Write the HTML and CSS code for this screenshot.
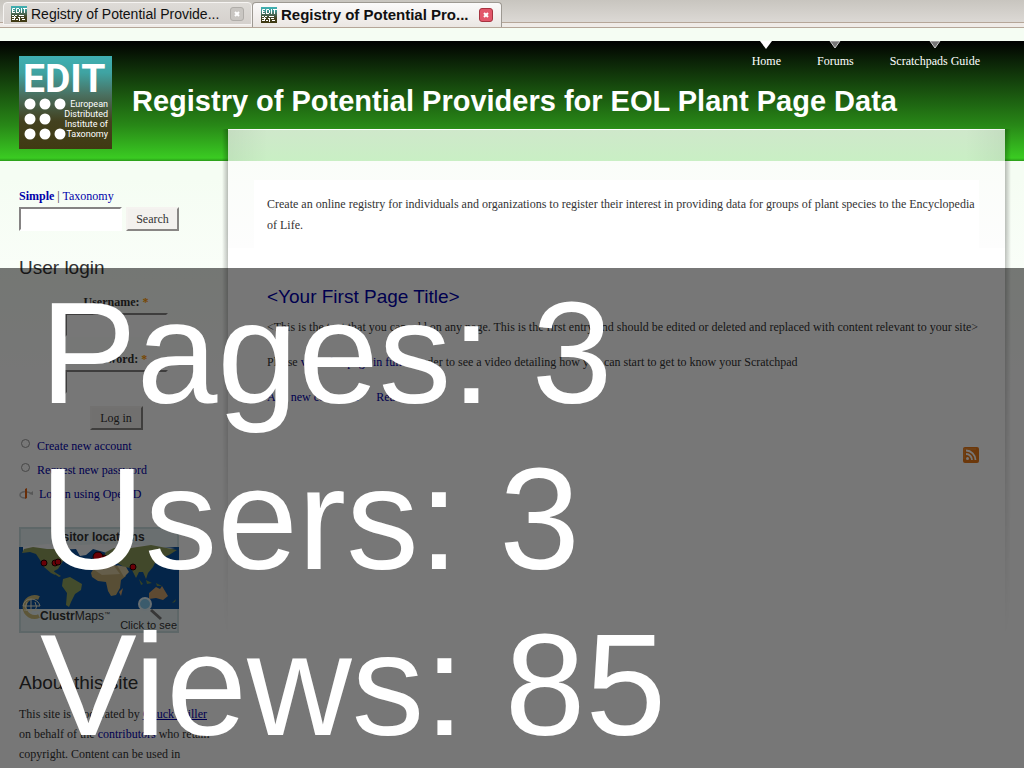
FILE: index.html
```
<!DOCTYPE html>
<html lang="en">
<head>
<meta charset="utf-8">
<title>Registry of Potential Providers for EOL Plant Page Data</title>
<link rel="stylesheet" href="styles.css">
</head>
<body>
<svg class="defs" width="0" height="0" aria-hidden="true">
  <defs>
    <linearGradient id="editGrad" x1="0" y1="0" x2="0" y2="1">
      <stop offset="0" stop-color="#3fb0b2"/><stop offset=".18" stop-color="#3fa3a2"/><stop offset=".42" stop-color="#4a7060"/><stop offset=".7" stop-color="#43411f"/><stop offset="1" stop-color="#403a12"/>
    </linearGradient>
    <symbol id="favicon" viewBox="0 0 16 16">
      <path fill="url(#editGrad)" d="M0 0h16v16H0z"/>
      <path fill="none" stroke="#fff" d="M4 2.500H1.500V7M1 4.500h2.500M1.500 6.500H4M5.500 7V2.500H8M8.500 3v3M5 6.500h3M10.500 2v5M12 2.500h4M13.500 3v4M1 9.500h2M4 9.500h2M8 9.500h5M1 11.500h4M7 11.500h2M10 11.500h3M3.500 10v4M1 13.500h2M5 13.500h2M8.500 12v3M11 13.500h3"/>
    </symbol>
  </defs>
</svg>
<nav class="tabs" aria-label="Open tabs">
  <div class="tab">
    <svg class="favicon"><use href="#favicon"/></svg>
    <span class="tab-title">Registry of Potential Provide...</span>
    <button class="close" aria-label="Close tab"><svg viewBox="0 0 12 12"><path d="M4 4l4 4M8 4l-4 4"/></svg></button>
  </div>
  <div class="tab tab-active">
    <svg class="favicon"><use href="#favicon"/></svg>
    <span class="tab-title">Registry of Potential Pro...</span>
    <button class="close close-active" aria-label="Close tab"><svg viewBox="0 0 12 12"><path d="M4 4l4 4M8 4l-4 4"/></svg></button>
  </div>
</nav>
<div class="page">
  <header class="header">
    <svg class="logo" viewBox="0 0 93 93" role="img" aria-label="EDIT">
      <path fill="url(#editGrad)" d="M0 0h93v93H0z"/>
      <text class="logo-name" x="4" y="36">EDIT</text>
      <g fill="#fff"><circle cx="11" cy="48" r="5.500"/><circle cx="26" cy="48" r="5.500"/><circle cx="41" cy="48" r="5.500"/><circle cx="11" cy="63" r="5.500"/><circle cx="26" cy="63" r="5.500"/><circle cx="11" cy="78" r="5.500"/><circle cx="26" cy="78" r="5.500"/><circle cx="41" cy="78" r="5.500"/></g>
      <g class="logo-sub"><text x="89" y="51">European</text><text x="89" y="61">Distributed</text><text x="89" y="71">Institute of</text><text x="89" y="81">Taxonomy</text></g>
    </svg>
    <div class="header-main">
      <nav class="menu">
        <a class="current" href="#"><svg viewBox="0 0 12 8"><path d="M0 0h12L6 8z"/></svg>Home</a>
        <a href="#"><svg viewBox="0 0 12 8"><path d="M1 0h10L6 7z"/></svg>Forums</a>
        <a href="#"><svg viewBox="0 0 12 8"><path d="M1 0h10L6 7z"/></svg>Scratchpads Guide</a>
      </nav>
      <h1>Registry of Potential Providers for EOL Plant Page Data</h1>
    </div>
  </header>
  <div class="columns">
    <aside class="sidebar">
      <form class="search">
        <div><a href="#"><b>Simple</b></a> | <a href="#">Taxonomy</a></div>
        <div class="search-row"><input type="text" aria-label="Search terms"><button type="button">Search</button></div>
      </form>
      <section class="login">
        <h2>User login</h2>
        <form>
          <label for="user">Username: <span>*</span></label>
          <input id="user" type="text">
          <label for="pass">Password: <span>*</span></label>
          <input id="pass" type="password">
          <button type="button">Log in</button>
        </form>
        <ul>
          <li><a href="#">Create new account</a></li>
          <li><a href="#">Request new password</a></li>
          <li class="openid"><svg viewBox="0 0 14 12"><path d="M6 3.500C2 4 1 5.500 1 7s2 3 5 3M8 4c2 0 3 .5 4 1.500" fill="none" stroke="#bbb" stroke-width="1.500"/><path d="M14 3v4l-4-1z" fill="#bbb"/><path d="M6 1l2-1v10l-2 1z" fill="#e06010"/></svg><a href="#">Log in using OpenID</a></li>
        </ul>
      </section>
      <svg class="map" viewBox="0 0 160 106" role="img" aria-label="Visitor locations">
        <path fill="#e4eef0" d="M0 0h160v106H0z"/>
        <path fill="#0a4f9c" d="M0 20h160v62H0z"/>
        <path fill="#f2f4f6" d="M4 20l24-3 34 1 20-1 36 1 38 3-18 3-38-2-12 4-14-4-7 6-6 1-4-7-20 1-33 1z"/>
        <g fill="#8c9a5a"><path d="M5 22l9-2 14 2 13 0 12 3-3 6-6 3-5 8-4 2 1 4-4-2-7-6-4-7-4-6-6-2-8 1zM32 42l5 4 5 3-2 1-6-4z"/><path d="M83 33l4-8 8-4 5 1 12-1 20-3 26 5-8 5-5 2-2-3-5 5-4 8-5 6-2 6-3-7-4 0-3 6-5-10-7-1-7-4-8 0z"/></g>
        <path fill="#bda873" d="M72 46l5-8 10-2 12 3 8 10-5 4-1 8-4 7-5 1-3-5-2-9-8-1-6-4z"/>
        <path fill="#d8c9a0" d="M74 42l8-5 13 2 6 8-18 1zM98 38l9 2 3 5-5 5z"/>
        <path fill="#91a35e" d="M44 52l7-2 12 7-1 6-6 4-4 8-2 5-3-2 1-12-5-7z"/>
        <path fill="#c99e6c" d="M130 66l7-6 4 2 2-3 6 10-5 4-7-2-7 1zM100 65l4-4-2 8z"/>
        <path fill="#6f8b4e" d="M120 52l4 5-2 1zM127 53l6 3-5 1zM137 56l6 3-5 0zM153 76l4-4-1 3z"/>
        <g fill="#e00010" stroke="#200" stroke-width="1"><circle cx="25" cy="36" r="3"/><circle cx="36" cy="36" r="3"/><circle cx="39" cy="35" r="3"/><circle cx="85" cy="31" r="3"/><circle cx="79" cy="30" r="5"/><circle cx="114" cy="40" r="3"/></g>
        <path fill="none" stroke="#c8b878" stroke-width="4" d="M20 71a10 10 0 1 0 0 18"/>
        <path fill="none" stroke="#f0ecd0" d="M12 72a8 8 0 0 0-8 7h17a9 9 0 0 0-9-7v14M5 83h16M8 75q-3 5 0 9M16 75q3 5 0 9"/>
        <path stroke="#777" stroke-width="3" d="M132 83l10 9"/><circle cx="126" cy="77" r="6" fill="#7fc4e8" stroke="#dcebf2" stroke-width="2"/>
        <path fill="none" stroke="#c9dcde" stroke-width="2" d="M1 20V1h158v19M1 82v23h158V82"/>
        <text class="map-title" x="79" y="14" text-anchor="middle">Visitor locations</text>
        <text class="map-brand" x="21" y="93"><tspan font-weight="bold">Clustr</tspan>Maps<tspan font-size="6" dy="-4">™</tspan></text>
        <text class="map-note" x="158" y="102" text-anchor="end">Click to see</text>
      </svg>
      <section class="about">
        <h2>About this site</h2>
        <p>This site is moderated by <a class="under" href="#">Chuck Miller</a> on behalf of the <a href="#">contributors</a> who retain copyright. Content can be used in</p>
      </section>
    </aside>
    <main class="panel">
      <div class="content">
        <p class="mission">Create an online registry for individuals and organizations to register their interest in providing data for groups of plant species to the Encyclopedia of Life.</p>
        <article>
          <h2><a href="#">&lt;Your First Page Title&gt;</a></h2>
          <p>&lt;This is the text that you can add on any page. This is the first entry and should be edited or deleted and replaced with content relevant to your site&gt;</p>
          <p>Please <a href="#">view this page in full</a> in order to see a video detailing how you can start to get to know your Scratchpad</p>
          <p class="links"><a href="#">Add new comment</a><a href="#">Read more</a></p>
        </article>
        <a class="feed" href="#" aria-label="Syndicate content"><svg viewBox="0 0 16 16"><rect width="16" height="16" rx="2" fill="#e87818"/><path d="M1 12V2h12" fill="none" stroke="#f09840"/><circle cx="4.500" cy="11.500" r="1.500" fill="#fff"/><path d="M3 7a6 6 0 0 1 6 6M3 3.500a9.500 9.500 0 0 1 9.500 9.500" fill="none" stroke="#fff" stroke-width="1.800"/></svg></a>
      </div>
    </main>
  </div>
</div>
<div class="stats">
  <div>Pages: 3</div>
  <div>Users: 3</div>
  <div>Views: 85</div>
</div>
</body>
</html>
```
FILE: styles.css
```
* { box-sizing: border-box; }
body {
  margin: 0;
  height: 100vh;
  overflow: hidden;
  position: relative;
  display: flex;
  flex-direction: column;
  background: #f5fdf3;
  color: #333;
  font: 12px/21px "Liberation Serif", serif;
}
h1, h2, p, ul { margin: 0; padding: 0; font-weight: normal; }
a { color: #00a; text-decoration: none; }
.defs { position: absolute; }

.tabs {
  display: flex;
  flex: none;
  height: 28px;
  padding: 2px 0 0 3px;
  background: linear-gradient(#c8c5bf, #dcd9d5 22px, #b5a698 22px, #b5a698 23px, #efebe7 23px);
  border-bottom: 1px solid #b5a698;
  font: 14px/20px "Liberation Sans", sans-serif;
  color: #111;
}
.tab {
  display: flex;
  align-items: center;
  gap: 4px;
  width: 249px;
  height: 23px;
  padding: 0 7px;
  background: linear-gradient(#dedbd7, #d5d1cd);
  border: 1px solid #f6f4f2;
  border-radius: 4px 4px 0 0;
}
.tab-active {
  height: 25px;
  width: 250px;
  padding: 0 8px;
  background: linear-gradient(#fbfafa, #ebe7e3);
  border: 1px solid #9d9992;
  border-bottom: 0;
  font-size: 15px;
  font-weight: bold;
}
.tab-title { flex: 1; white-space: nowrap; }
.favicon { width: 16px; height: 16px; flex: none; }
.close {
  width: 14px;
  height: 14px;
  flex: none;
  padding: 0;
  border: 1px solid #b0ada9;
  border-radius: 3px;
  background: #c9c6c2;
}
.close svg { display: block; width: 12px; height: 12px; stroke: #fff; stroke-width: 2; }
.close-active { background: #e2566a; border-color: #a63440; }

.page {
  flex: 1;
  min-height: 0;
  overflow: hidden;
  padding-top: 13px;
  background: linear-gradient(#f5fdf3, #f5fdf3 150px, #fff 360px);
}
.header {
  display: flex;
  height: 120px;
  padding: 0 19px;
  gap: 20px;
  background: linear-gradient(#000, #0b2207 20px, #288717 84px, #3acb22 117px, #2a9c18);
}
.logo { width: 93px; height: 93px; margin-top: 15px; flex: none; }
.logo text { fill: #fff; font-family: Roboto, sans-serif; }
.logo .logo-name { font-size: 39px; font-weight: bold; }
.logo .logo-sub text { font-size: 9px; text-anchor: end; }
.header-main { flex: 1; min-width: 0; }
.menu { display: flex; justify-content: flex-end; gap: 36px; padding-right: 25px; }
.menu a { display: flex; flex-direction: column; align-items: center; color: #fff; line-height: 24px; }
.menu svg { width: 12px; height: 8px; fill: #777; stroke: #ccc; }
.menu .current svg { fill: #fff; stroke: none; }
h1 {
  margin-top: 11px;
  font: bold 29px/34px "Liberation Sans", sans-serif;
  color: #fff;
  white-space: nowrap;
}
.columns { display: flex; align-items: flex-start; padding-right: 19px; }
.sidebar { width: 228px; flex: none; padding: 25px 15px 0 19px; }
.search-row { display: flex; gap: 4px; }
input {
  width: 103px;
  height: 24px;
  padding: 2px;
  border: 2px solid;
  border-color: #858383 #fff #fff #858383;
  background: #fff;
}
.sidebar button {
  width: 53px;
  height: 24px;
  padding: 0;
  border: 2px solid;
  border-color: #f5f3f0 #888684 #888684 #f5f3f0;
  background: #f3f1ee;
  color: #333;
  font: 12px/20px "Liberation Serif", serif;
}
h2 { font: 19px/22px "Liberation Sans", sans-serif; color: #333; }
.login { padding-top: 26px; }
.login form { display: flex; flex-direction: column; align-items: center; padding-top: 13px; }
.login label { font: bold 12px/21px "Liberation Serif", serif; }
.login label span { color: #f90; }
.login form input { margin-bottom: 12px; }
.login ul { list-style: none; padding-top: 4px; }
.login li { height: 24px; padding-left: 18px; line-height: 24px; position: relative; }
.login li::before {
  content: "";
  position: absolute;
  left: 2px;
  top: 5px;
  width: 7px;
  height: 7px;
  border: 1px solid #999;
  border-radius: 50%;
}
.login .openid { display: flex; gap: 6px; align-items: center; padding: 0; }
.login .openid::before { display: none; }
.openid svg { width: 14px; height: 12px; }
.map { display: block; width: 160px; height: 106px; margin-top: 21px; }
.map text { fill: #333; font-family: "Liberation Sans", sans-serif; }
.map .map-title { font-size: 12px; font-weight: bold; }
.map .map-brand { font-size: 12px; }
.map .map-note { font-size: 11px; }
.about { padding-top: 39px; }
.about p { padding-top: 10px; line-height: 20px; }
.under { text-decoration: underline; }

.panel {
  position: relative;
  flex: 1;
  min-width: 0;
  height: 512px;
  margin-top: -32px;
  padding: 51px 26px 0;
  background:
    linear-gradient(90deg, rgba(0, 0, 0, .05), transparent 40px, transparent calc(100% - 40px), rgba(0, 0, 0, .05)) 0 0 / 100% 32px no-repeat,
    linear-gradient(#fff 1px, #cfe8cb 1px, #c9efc4 32px, #fafdf9 32px, #fdfdfd 119px, #fff 119px);
}
.panel::before,
.panel::after {
  content: "";
  position: absolute;
  top: 0;
  bottom: 0;
  width: 6px;
  -webkit-mask-image: linear-gradient(#000 20%, transparent);
  mask-image: linear-gradient(#000 20%, transparent);
}
.panel::before { right: 100%; background: linear-gradient(270deg, rgba(0, 0, 0, .25), transparent); }
.panel::after { left: 100%; background: linear-gradient(90deg, rgba(0, 0, 0, .25), transparent); }
.content { display: flex; flex-direction: column; }
.mission { padding: 14px 0 13px 13px; background: #fff; }
article { padding: 37px 0 0 13px; }
article p { margin-bottom: 14px; white-space: nowrap; }
article h2 { margin-bottom: 9px; }
.links { display: flex; gap: 18px; }
.feed { align-self: flex-end; width: 16px; height: 16px; margin-top: 25px; }
.feed svg { display: block; }

.stats {
  position: absolute;
  inset: 268px 0 0;
  padding: 2px 0 0 40px;
  background: rgba(0, 0, 0, .533);
  color: #fff;
  font: 145px/166px "Liberation Sans", sans-serif;
  white-space: nowrap;
  overflow: hidden;
}
```
